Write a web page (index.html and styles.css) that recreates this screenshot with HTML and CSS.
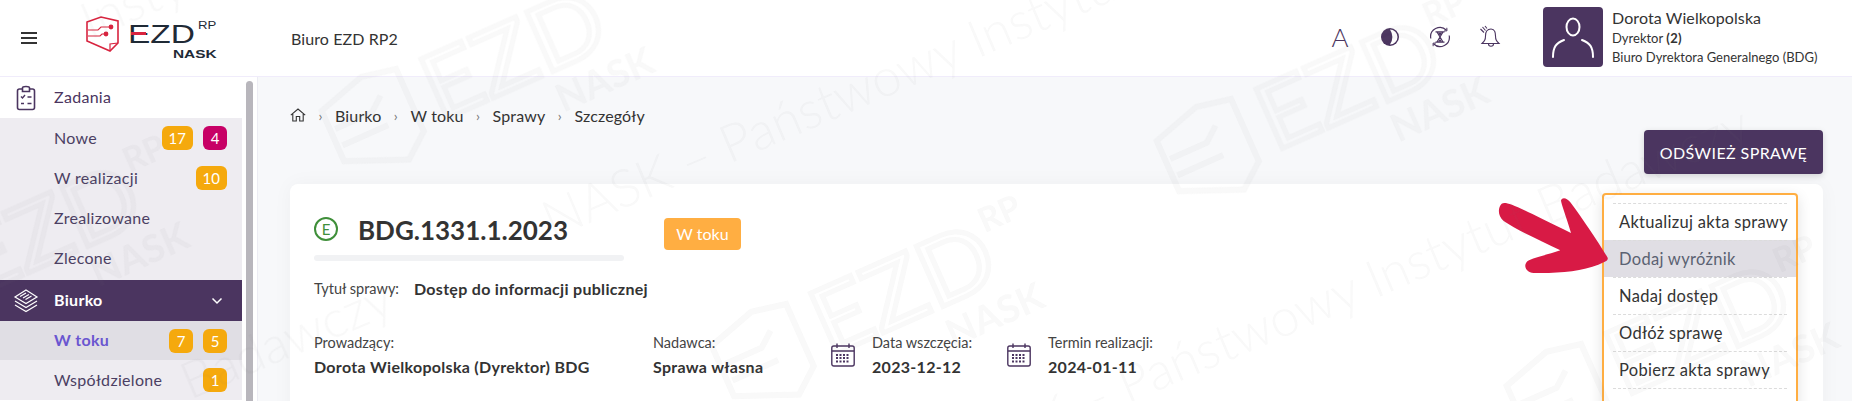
FILE: index.html
```html
<!DOCTYPE html>
<html>
<head>
    <title>Szczegóły sprawy</title>
    <link rel="stylesheet" href="styles.css">
</head>
<body>
    <header class="topbar">
        <div class="hamburger"><span></span><span></span><span></span></div>
        <div class="logo">
            <svg class="logo-mark" width="34" height="36" viewBox="0 0 34 36" fill="none" stroke="#d8243f" stroke-width="1.6">
                <path d="M1 6 L15 1 L32 5 V27 L24 35 L1 25 Z"/>
                <path d="M24 35 L24 28 L32 27" stroke-width="1.2"/>
                <path d="M2 14 H12 L15 11 H25" stroke-width="1.1"/>
                <path d="M2 20 H14 L16 18 H20" stroke-width="1.1"/>
                <circle cx="25" cy="11" r="1.6" fill="#d8243f"/>
                <circle cx="20" cy="18" r="1.6" fill="#d8243f"/>
            </svg>
            <div class="logo-text">
                <span class="logo-ezd">EZD</span>
                <i class="logo-bar"></i>
                <span class="logo-rp">RP</span>
                <span class="logo-nask">NASK</span>
            </div>
        </div>
        <div class="desk-name">Biuro EZD RP2</div>
        <div class="tools">
            <span class="tool tool-a">A</span>
            <svg class="tool" width="20" height="20" viewBox="0 0 20 20"><circle cx="10" cy="10" r="9" fill="#4b3560"/><path d="M10 2.500 A7.500 7.500 0 0 1 10 17.500 A14 14 0 0 0 10 2.500Z" fill="#fff"/></svg>
            <svg class="tool" width="22" height="22" viewBox="0 0 22 22" fill="none" stroke="#4b3560" stroke-width="1.200">
                <path d="M1.800 12.500 A9.300 9.300 0 0 1 17.500 4.200"/><path d="M20.200 9.500 A9.300 9.300 0 0 1 4.500 17.800"/>
                <path d="M15 5 L18 4.800 L17.800 1.800" stroke-width="1"/><path d="M7 17 L4 17.200 L4.200 20.200" stroke-width="1"/>
                <path d="M6.500 5.800 H15.500 M6.500 16.200 H15.500 M8 6 L11 11 L8 16 M14 6 L11 11 L14 16"/>
                <path d="M8.800 6.500 H13.200 L11 10Z M9 15.800 L11 13 L13 15.800Z" fill="#4b3560" stroke="none"/>
            </svg>
            <svg class="tool" width="22" height="24" viewBox="0 0 22 24" fill="none" stroke="#4b3560" stroke-width="1.100">
                <path d="M12 4 C7 4 6.500 8 6.500 11 C6.500 15 5.500 16 3 18.500 H20 C17.500 16 16.500 15 16.500 11 C16.500 8 16 4 12 4Z"/>
                <path d="M9.500 19 C9.500 22 14.500 22 14.500 19"/>
                <path d="M1.500 4 L5 7.500 M3.500 2 L6.500 5.500 M6 1 L8 3.500"/>
            </svg>
        </div>
        <div class="user">
            <div class="avatar">
                <svg width="60" height="60" viewBox="0 0 60 60" fill="none" stroke="#fff" stroke-width="2" stroke-linecap="round">
                    <ellipse cx="30" cy="20" rx="6.500" ry="8.500"/>
                    <path d="M10 50 C10 40 13 36 21 33"/>
                    <path d="M50 50 C50 40 47 36 39 33"/>
                </svg>
            </div>
            <div class="user-info">
                <div class="user-name">Dorota Wielkopolska</div>
                <div class="user-role">Dyrektor <b>(2)</b></div>
                <div class="user-role">Biuro Dyrektora Generalnego (BDG)</div>
            </div>
        </div>
    </header>

    <div class="layout">
        <aside class="sidebar">
            <nav class="menu">
                <div class="menu-head">
                    <svg class="menu-icon" width="20" height="26" viewBox="0 0 20 26" fill="none" stroke="#4b3560" stroke-width="1.600">
                        <rect x="1.500" y="4" width="17" height="20.500" rx="2"/>
                        <path d="M6.500 4 V2.800 C6.500 1 13.500 1 13.500 2.800 V4 V6.500 H6.500Z" fill="#fff"/>
                        <path d="M5 11.500 L6.500 13 L9 10 M11.500 12 H15.500 M5 18.500 H8 M11.500 18.500 H15.500" stroke-width="1.400"/>
                    </svg>
                    <span>Zadania</span>
                </div>
                <div class="submenu">
                    <div class="sub-item">Nowe<span class="badges"><span class="badge">17</span><span class="badge badge-red">4</span></span></div>
                    <div class="sub-item">W realizacji<span class="badges"><span class="badge">10</span></span></div>
                    <div class="sub-item">Zrealizowane</div>
                    <div class="sub-item">Zlecone</div>
                </div>
                <div class="menu-head active">
                    <svg class="menu-icon" width="26" height="26" viewBox="0 0 26 26" fill="none" stroke="#fff" stroke-width="1.200">
                        <path d="M13 2 L24 9 L13 15.500 L2 9 Z"/>
                        <path d="M7 8.500 L13 5 M10 10 L16 6.500 M12.500 11.500 L18.500 8"/>
                        <path d="M2 13 L13 19.500 L24 13"/>
                        <path d="M2 17 L13 23.500 L24 17"/>
                    </svg>
                    <span>Biurko</span>
                    <svg class="chevron" width="12" height="8" viewBox="0 0 12 8" fill="none" stroke="#fff" stroke-width="1.500"><path d="M1.500 1.500 L6 6 L10.500 1.500"/></svg>
                </div>
                <div class="sub-item current">W toku<span class="badges"><span class="badge">7</span><span class="badge">5</span></span></div>
                <div class="sub-item">Współdzielone<span class="badges"><span class="badge">1</span></span></div>
            </nav>
            <div class="scrollbar"></div>
        </aside>

        <main class="content">
            <div class="crumbs">
                <svg width="16" height="14" viewBox="0 0 16 14" fill="none" stroke="#333" stroke-width="1.100"><path d="M.8 7.200 L8 1 L15.200 7.200 M2.800 6 V13 H6.300 V8.500 H9.700 V13 H13.200 V6"/></svg>
                <span class="sep">›</span><span>Biurko</span>
                <span class="sep">›</span><span>W toku</span>
                <span class="sep">›</span><span>Sprawy</span>
                <span class="sep">›</span><span>Szczegóły</span>
            </div>
            <div class="actions"><button class="btn">ODŚWIEŻ SPRAWĘ</button></div>
            <section class="card">
                <div class="case-head">
                    <span class="e-mark">E</span>
                    <h1>BDG.1331.1.2023</h1>
                    <span class="status">W toku</span>
                </div>
                <div class="rule"></div>
                <div class="case-title"><span class="label">Tytuł sprawy:</span><b>Dostęp do informacji publicznej</b></div>
                <div class="fields">
                    <div class="field f-owner"><span class="label">Prowadzący:</span><b>Dorota Wielkopolska (Dyrektor) BDG</b></div>
                    <div class="field f-sender"><span class="label">Nadawca:</span><b>Sprawa własna</b></div>
                    <div class="date-field f-start">
                        <svg width="24" height="24" viewBox="0 0 24 24" fill="none" stroke="#4b3560" stroke-width="1.400">
                            <rect x=".8" y="3" width="22.400" height="20" rx="2"/><path d="M1 8 H23 M6 .5 V5 M18 .5 V5"/>
                            <path d="M5 12 H19 M5 15 H19 M5 18.500 H19" stroke-width="2" stroke-dasharray="2 1.500"/>
                        </svg>
                        <div class="field"><span class="label">Data wszczęcia:</span><b>2023-12-12</b></div>
                    </div>
                    <div class="date-field">
                        <svg width="24" height="24" viewBox="0 0 24 24" fill="none" stroke="#4b3560" stroke-width="1.400">
                            <rect x=".8" y="3" width="22.400" height="20" rx="2"/><path d="M1 8 H23 M6 .5 V5 M18 .5 V5"/>
                            <path d="M5 12 H19 M5 15 H19 M5 18.500 H19" stroke-width="2" stroke-dasharray="2 1.500"/>
                        </svg>
                        <div class="field"><span class="label">Termin realizacji:</span><b>2024-01-11</b></div>
                    </div>
                </div>
                <ul class="dropdown">
                    <li>Aktualizuj akta sprawy</li>
                    <li class="hover">Dodaj wyróżnik</li>
                    <li>Nadaj dostęp</li>
                    <li>Odłóż sprawę</li>
                    <li>Pobierz akta sprawy</li>
                    <li></li>
                </ul>
            </section>
        </main>
    </div>

    <!-- czerwona strzalka -->
    <svg class="arrow" width="112" height="76" viewBox="0 0 336 228">
        <path d="M14 20 C30 12 60 28 222 108 C208 60 192 20 192 10 C196 -2 212 4 220 16 C260 70 300 130 332 182 C334 190 328 192 320 196 C270 222 190 230 110 228 C84 226 76 200 96 190 C120 178 160 172 190 160 C130 130 60 100 20 72 C2 58 2 32 14 20Z" fill="#d81a45"/>
    </svg>

    <!-- znak wodny -->
    <svg class="watermark" width="1852" height="401" viewBox="0 0 1852 401">
        <defs>
            <g id="wm-logo" fill="none" stroke="#777" stroke-width="6">
                <path d="M-45 -30 L5 -45 L40 -38 V30 L15 50 L-45 25Z"/>
                <path d="M-40 -8 H0 L15 -20 M-40 10 H10"/>
                <text x="58" y="28" font-family="Liberation Sans" font-size="92" textLength="190" lengthAdjust="spacingAndGlyphs" stroke-width="5">EZD</text>
                <text x="250" y="-22" font-family="Liberation Sans" font-weight="700" font-size="34" fill="#777" stroke="none">RP</text>
                <text x="175" y="70" font-family="Liberation Sans" font-weight="700" font-size="38" fill="#777" stroke="none">NASK</text>
            </g>
        </defs>
        <g opacity=".05">
            <use href="#wm-logo" transform="translate(375 120) rotate(-24)"/>
            <use href="#wm-logo" transform="translate(1210 150) rotate(-24)"/>
            <use href="#wm-logo" transform="translate(765 355) rotate(-24)"/>
            <use href="#wm-logo" transform="translate(1560 395) rotate(-24)"/>
            <use href="#wm-logo" transform="translate(-90 295) rotate(-24)"/>
            <g font-family="Lato" font-size="52" font-weight="300" fill="#777">
                <text transform="translate(552 239) rotate(-23)">NASK – Państwowy Instytut</text>
                <text transform="translate(950 479) rotate(-23)">NASK – Państwowy Instytut Badawczy</text>
                <text transform="translate(190 400) rotate(-23)">Badawczy</text>
                <text transform="translate(90 40) rotate(-23)">Instytut</text>
            </g>
        </g>
    </svg>
</body>
</html>
```

FILE: styles.css
```css
* {
    margin: 0;
    padding: 0;
    box-sizing: border-box;
    font-family: 'Lato', 'Noto Sans', sans-serif;
}

html {
    overflow: hidden;
}

body {
    width: 1852px;
    height: 401px;
    overflow: hidden;
    position: relative;
    background: #fff;
    color: #333;
}

/* gorny pasek */
.topbar {
    height: 77px;
    display: flex;
    align-items: center;
    border-bottom: 1px solid #f0ecfb;
    position: relative;
}

.hamburger {
    width: 16px;
    margin-left: 21px;
    display: flex;
    flex-direction: column;
    gap: 3px;
}

.hamburger span {
    height: 2px;
    background: #333;
}

.logo {
    display: flex;
    margin-left: 49px;
    width: 205px;
}

.logo-mark {
    margin-top: -1px;
}

.logo-text {
    position: relative;
    width: 100px;
    height: 42px;
    margin-left: 8px;
}

.logo-ezd {
    position: absolute;
    left: 0;
    top: 1px;
    font-family: 'Liberation Sans', sans-serif;
    font-size: 25px;
    line-height: 32px;
    color: #1f2a36;
    transform: scaleX(1.34);
    transform-origin: left center;
}

.logo-bar {
    position: absolute;
    left: 3px;
    top: 15px;
    width: 15px;
    height: 3px;
    background: #d8243f;
}

.logo-rp {
    position: absolute;
    left: 70px;
    top: 1px;
    font-family: 'Liberation Sans', sans-serif;
    font-size: 11px;
    line-height: 14px;
    color: #1f2a36;
    transform: scaleX(1.2);
    transform-origin: left center;
}

.logo-nask {
    position: absolute;
    left: 45px;
    top: 30px;
    font-family: 'Liberation Sans', sans-serif;
    font-size: 11px;
    line-height: 14px;
    font-weight: 700;
    color: #1f2a36;
    transform: scaleX(1.4);
    transform-origin: left center;
}

.desk-name {
    font-size: 16px;
    letter-spacing: .1px;
    color: #333;
}

.tools {
    position: absolute;
    left: 1315px;
    top: 25px;
    display: grid;
    grid-template-columns: repeat(4, 50px);
    justify-items: center;
    align-items: center;
}

.tool-a {
    font-size: 26px;
    font-weight: 300;
    line-height: 24px;
    color: #4b3560;
}

.user {
    position: absolute;
    left: 1543px;
    top: 7px;
    display: flex;
    gap: 9px;
}

.avatar {
    width: 60px;
    height: 60px;
    background: #4b3560;
    border-radius: 4px;
}

.user-name {
    font-size: 16px;
    letter-spacing: .1px;
    line-height: 22px;
    color: #333;
}

.user-role {
    font-size: 13px;
    line-height: 19px;
    color: #333;
}

.layout {
    display: flex;
    height: 324px;
    overflow: hidden;
}

/* menu boczne */
.sidebar {
    width: 258px;
    display: flex;
    border-right: 1px solid #ececf3;
}

.menu {
    width: 242px;
}

.menu-head {
    height: 41px;
    display: flex;
    align-items: center;
    padding-left: 54px;
    padding-bottom: 2px;
    font-size: 16px;
    letter-spacing: .3px;
    color: #4b3560;
    position: relative;
}

.menu-icon {
    position: absolute;
    left: 16px;
    top: 8px;
}

.menu-head.active {
    background: #4b3560;
    color: #fff;
    font-weight: 700;
}

.menu-head.active .menu-icon {
    left: 13px;
}

.chevron {
    position: absolute;
    left: 211px;
    top: 17px;
}

.submenu {
    background: #eeecf1;
    padding-bottom: 2px;
}

.sub-item {
    height: 40px;
    display: flex;
    align-items: center;
    padding-left: 54px;
    padding-right: 15px;
    padding-bottom: 2px;
    background: #eeecf1;
    font-size: 16px;
    letter-spacing: .3px;
    color: #4b3f63;
}

.sub-item.current {
    height: 39px;
    background: #e0dee4;
    color: #6a56d0;
    font-weight: 700;
}

.badges {
    margin-left: auto;
    margin-top: 2px;
    display: flex;
    gap: 10px;
}

.badge {
    min-width: 24px;
    height: 24px;
    padding: 0 7px;
    border-radius: 6px;
    background: #f5a90d;
    color: #fff;
    font-size: 15px;
    font-weight: 400;
    letter-spacing: 0;
    line-height: 24px;
    text-align: center;
}

.badge-red {
    background: #c70066;
}

.scrollbar {
    width: 7px;
    margin: 4px 0 0 4px;
    background: #b8b6bc;
    border-radius: 4px 4px 0 0;
}

/* tresc */
.content {
    flex: 1;
    background: #f7f8fa;
    padding: 28px 29px 0 32px;
}

.crumbs {
    display: flex;
    align-items: center;
    height: 20px;
    font-size: 16px;
    letter-spacing: .15px;
    color: #333;
}

.sep {
    width: 29px;
    text-align: center;
    color: #777;
    font-size: 14px;
}

.actions {
    display: flex;
    justify-content: flex-end;
    margin-top: 5px;
}

.btn {
    width: 179px;
    height: 44px;
    border: none;
    border-radius: 4px;
    background: #4b3560;
    color: #fff;
    font-size: 16px;
    letter-spacing: .4px;
    box-shadow: 0 2px 6px rgba(0,0,0,0.15);
}

.card {
    position: relative;
    height: 300px;
    margin-top: 10px;
    padding: 32px 0 0 24px;
    background: #fff;
    border-radius: 8px;
    box-shadow: 0 0 20px rgba(0,0,0,0.04);
}

.case-head {
    display: flex;
    align-items: center;
    height: 36px;
}

.e-mark {
    width: 24px;
    height: 24px;
    margin-bottom: 11px;
    border: 2px solid #3f8f3a;
    border-radius: 50%;
    color: #3f8f3a;
    font-size: 15px;
    line-height: 20px;
    text-align: center;
}

h1 {
    margin-left: 20px;
    margin-bottom: 8px;
    width: 306px;
    font-size: 26px;
    font-weight: 700;
    color: #333;
}

.status {
    width: 77px;
    height: 32px;
    border-radius: 4px;
    background: #ffae42;
    color: #fff;
    font-size: 16px;
    line-height: 32px;
    text-align: center;
}

.rule {
    width: 310px;
    height: 6px;
    margin-top: 3px;
    background: #f1f2f4;
    border-radius: 3px;
}

.label {
    font-size: 14.500px;
    color: #444;
}

.case-title {
    display: flex;
    gap: 15px;
    margin-top: 16px;
    height: 22px;
    align-items: center;
}

b {
    font-weight: 700;
    font-size: 16px;
    letter-spacing: .3px;
    color: #333;
}

.user-role b {
    font-size: 13px;
}

.fields {
    display: flex;
    margin-top: 35px;
}

.field {
    display: flex;
    flex-direction: column;
    gap: 6px;
}

.f-owner {
    width: 339px;
}

.f-sender {
    width: 178px;
}

.date-field {
    display: flex;
    align-items: center;
    gap: 17px;
}

.f-start {
    width: 176px;
}

/* menu rozwijane */
.dropdown {
    position: absolute;
    top: 9px;
    right: 25px;
    width: 196px;
    height: 240px;
    padding-top: 8px;
    list-style: none;
    background: #fff;
    border: 2px solid #ffae42;
    border-radius: 4px;
    box-shadow: 0 4px 14px rgba(0,0,0,0.12);
}

.dropdown li {
    position: relative;
    height: 37px;
    line-height: 38px;
    padding-left: 15px;
    font-size: 16.500px;
    letter-spacing: .3px;
    color: #333;
}

.dropdown li::before {
    content: "";
    position: absolute;
    top: 0;
    left: 9px;
    right: 9px;
    border-top: 1px dashed #dcdcdc;
}

.dropdown li.hover {
    background: #e0dee4;
    color: #5b6272;
}

.arrow {
    position: absolute;
    left: 1497px;
    top: 197px;
}

.watermark {
    position: absolute;
    left: 0;
    top: 0;
    pointer-events: none;
    filter: blur(.6px);
}
```
